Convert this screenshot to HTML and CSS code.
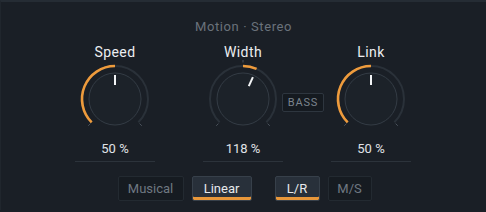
FILE: index.html
```html
<!DOCTYPE html>
<html lang="en">
<head>
    <meta charset="UTF-8">
    <title>Motion Stereo</title>
    <link rel="stylesheet" href="styles.css">
</head>
<body>
<div class="panel">
    <div class="title">Motion · Stereo</div>
    <div class="knobs">
        <div class="knob">
            <div class="label">Speed</div>
            <svg class="dial" width="80" height="80" viewBox="0 0 80 80">
                <path class="track" d="M16.67 63.33 A33 33 0 1 1 63.33 63.33"/>
                <path class="fill" d="M16.67 63.33 A33 33 0 0 1 40 7"/>
                <line class="tick" x1="15.4" y1="64.6" x2="13.2" y2="66.8"/>
                <line class="tick" x1="64.6" y1="64.6" x2="66.8" y2="66.8"/>
                <circle class="body" cx="40" cy="40" r="26"/>
                <line class="pointer" x1="40" y1="26" x2="40" y2="16"/>
            </svg>
            <div class="value">50 %</div>
        </div>
        <div class="knob">
            <div class="label">Width</div>
            <svg class="dial" width="80" height="80" viewBox="0 0 80 80">
                <path class="track" d="M16.67 63.33 A33 33 0 1 1 63.33 63.33"/>
                <path class="fill" d="M40 7 A33 33 0 0 1 53.58 9.92"/>
                <line class="tick" x1="15.4" y1="64.6" x2="13.2" y2="66.8"/>
                <line class="tick" x1="64.6" y1="64.6" x2="66.8" y2="66.8"/>
                <line class="tick" x1="40" y1="1" x2="40" y2="3.5"/>
                <circle class="body" cx="40" cy="40" r="26"/>
                <line class="pointer" x1="45.8" y1="27.2" x2="49.9" y2="18.1"/>
            </svg>
            <div class="value">118 %</div>
            <div class="bass">BASS</div>
        </div>
        <div class="knob">
            <div class="label">Link</div>
            <svg class="dial" width="80" height="80" viewBox="0 0 80 80">
                <path class="track" d="M16.67 63.33 A33 33 0 1 1 63.33 63.33"/>
                <path class="fill" d="M16.67 63.33 A33 33 0 0 1 40 7"/>
                <line class="tick" x1="15.4" y1="64.6" x2="13.2" y2="66.8"/>
                <line class="tick" x1="64.6" y1="64.6" x2="66.8" y2="66.8"/>
                <circle class="body" cx="40" cy="40" r="26"/>
                <line class="pointer" x1="40" y1="26" x2="40" y2="16"/>
            </svg>
            <div class="value">50 %</div>
        </div>
    </div>
    <div class="modes">
        <div class="group">
            <div class="btn musical">Musical</div>
            <div class="btn linear on">Linear</div>
        </div>
        <div class="group">
            <div class="btn lr on">L/R</div>
            <div class="btn ms">M/S</div>
        </div>
    </div>
</div>
</body>
</html>
```

FILE: styles.css
```css
body {
    margin: 0;
    background: #1a1f26;
    font-family: Roboto, "Liberation Sans", sans-serif;
}
.panel {
    height: 210px;
    border-top: 2px solid #252c34;
    border-left: 1px solid #20262d;
    box-sizing: border-box;
    padding-top: 17px;
}
.title {
    text-align: center;
    font-size: 13px;
    line-height: 16px;
    letter-spacing: 0.6px;
    color: #6a727b;
}
.knobs {
    display: grid;
    grid-template-columns: 128px 128px 128px;
    justify-content: center;
    margin-top: 8px;
    margin-left: -1px;
}
.knob {
    position: relative;
    display: flex;
    flex-direction: column;
    align-items: center;
}
.label {
    font-size: 14px;
    line-height: 18px;
    color: #eceef1;
    letter-spacing: 0.4px;
}
.dial {
    display: block;
    margin-top: -2px;
}
.track {
    fill: none;
    stroke: #2a3139;
    stroke-width: 2;
}
.fill {
    fill: none;
    stroke: #ee9b3c;
    stroke-width: 2.6;
}
.tick {
    stroke: #4a525b;
    stroke-width: 1;
}
.body {
    fill: #1c2229;
    stroke: #343c45;
    stroke-width: 1;
}
.pointer {
    stroke: #f2f4f6;
    stroke-width: 2;
}
.value {
    width: 80px;
    margin-top: 2px;
    padding-bottom: 4px;
    border-bottom: 1px solid #2c333b;
    text-align: center;
    font-size: 13px;
    line-height: 16px;
    color: #e0e3e7;
}
.bass {
    position: absolute;
    left: 103px;
    top: 50px;
    width: 42px;
    height: 19px;
    box-sizing: border-box;
    border: 1px solid #2e363f;
    border-radius: 2px;
    background: #151a20;
    color: #7b848e;
    font-size: 11px;
    line-height: 17px;
    letter-spacing: 0.8px;
    text-align: center;
}
.modes {
    display: flex;
    justify-content: center;
    gap: 23px;
    margin-top: 14px;
    margin-left: 2px;
}
.group {
    display: flex;
    gap: 8px;
}
.btn {
    height: 25px;
    box-sizing: border-box;
    border: 1px solid #232a31;
    border-radius: 2px;
    background: #161b21;
    color: #6f7882;
    font-size: 13px;
    line-height: 23px;
    text-align: center;
}
.btn.on {
    background: #28303a;
    border-color: #37404a;
    color: #e6e9ec;
    box-shadow: inset 0 -3px 0 #e8973a;
}
.musical { width: 66px; }
.linear { width: 60px; }
.lr { width: 45px; }
.ms { width: 44px; }
```
